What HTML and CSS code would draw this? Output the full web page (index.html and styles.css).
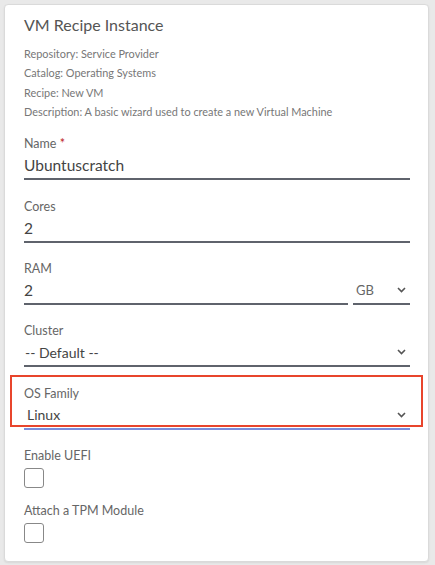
FILE: index.html
```html
<!DOCTYPE html>
<html>
<head>
	<meta charset="utf-8">
	<link rel="stylesheet" href="styles.css">
</head>
<body>
	<div class="card">
		<h1 class="title">VM Recipe Instance</h1>
		<div class="info">
			<p>Repository: Service Provider</p>
			<p>Catalog: Operating Systems</p>
			<p>Recipe: New VM</p>
			<p>Description: A basic wizard used to create a new Virtual Machine</p>
		</div>

		<div class="field">
			<label class="label">Name <span class="req">*</span></label>
			<div class="input">Ubuntuscratch</div>
		</div>

		<div class="field">
			<label class="label">Cores</label>
			<div class="input">2</div>
		</div>

		<div class="field">
			<label class="label">RAM</label>
			<div class="row">
				<div class="input grow">2</div>
				<div class="input select unit">GB
					<svg class="chev" width="9" height="6" viewBox="0 0 9 6"><path d="M1 1l3.5 3.5L8 1" fill="none" stroke="#555" stroke-width="1.6"/></svg>
				</div>
			</div>
		</div>

		<div class="field">
			<label class="label">Cluster</label>
			<div class="input select">-- Default --
				<svg class="chev" width="9" height="6" viewBox="0 0 9 6"><path d="M1 1l3.5 3.5L8 1" fill="none" stroke="#555" stroke-width="1.6"/></svg>
			</div>
		</div>

		<div class="field">
			<div class="highlight">
				<label class="label">OS Family</label>
				<div class="input select focus">Linux
					<svg class="chev" width="9" height="6" viewBox="0 0 9 6"><path d="M1 1l3.5 3.5L8 1" fill="none" stroke="#555" stroke-width="1.6"/></svg>
				</div>
			</div>
		</div>

		<div class="check">
			<label class="label">Enable UEFI</label>
			<span class="box"></span>
		</div>

		<div class="check">
			<label class="label">Attach a TPM Module</label>
			<span class="box"></span>
		</div>
	</div>
</body>
</html>
```

FILE: styles.css
```css
body {
	margin: 0;
	padding: 4px 6px 5px 4px;
	background: #e9e9e9;
	font-family: Lato, "Noto Sans", sans-serif;
	color: #555;
}

.card {
	background: #fff;
	border: 1px solid #dadada;
	border-radius: 4px;
	padding: 10px 18px 18px 19px;
	box-shadow: 0 1px 2px rgba(0,0,0,0.08);
}

.title {
	margin: 0;
	font-size: 16px;
	font-weight: normal;
	line-height: 20px;
	color: #555;
}

.info {
	margin-top: 9px;
}
.info p {
	margin: 0;
	font-size: 10.9px;
	line-height: 19.3px;
	color: #777;
}

.field {
	margin-top: 15px;
}
.field + .field {
	margin-top: 18.4px;
}

.label {
	display: block;
	font-size: 12.5px;
	line-height: 16px;
	color: #666;
}
.req {
	color: #b22;
}

.input {
	display: flex;
	align-items: center;
	height: 26px;
	font-size: 15.5px;
	color: #444;
	border-bottom: 2px solid #5f636c;
}

.row {
	display: flex;
	gap: 5px;
}
.grow {
	flex: 1;
}

.select {
	font-size: 14px;
	padding-left: 1px;
}
.select .chev {
	margin-left: auto;
	margin-right: 4px;
}
.unit {
	width: 54px;
	font-size: 13px;
	padding-left: 3px;
	color: #666;
}

.focus {
	border-bottom-color: #7b8edb;
	padding-left: 3px;
}

.highlight {
	position: relative;
}
.highlight::after {
	content: "";
	position: absolute;
	top: -11px;
	left: -14px;
	right: -13px;
	bottom: 3px;
	border: 2px solid #e8452c;
	pointer-events: none;
}

.check {
	margin-top: 18px;
}
.check + .check {
	margin-top: 15px;
}
.box {
	display: block;
	width: 18px;
	height: 18px;
	margin-top: 4px;
	border: 1px solid #888;
	border-radius: 3px;
}
```
